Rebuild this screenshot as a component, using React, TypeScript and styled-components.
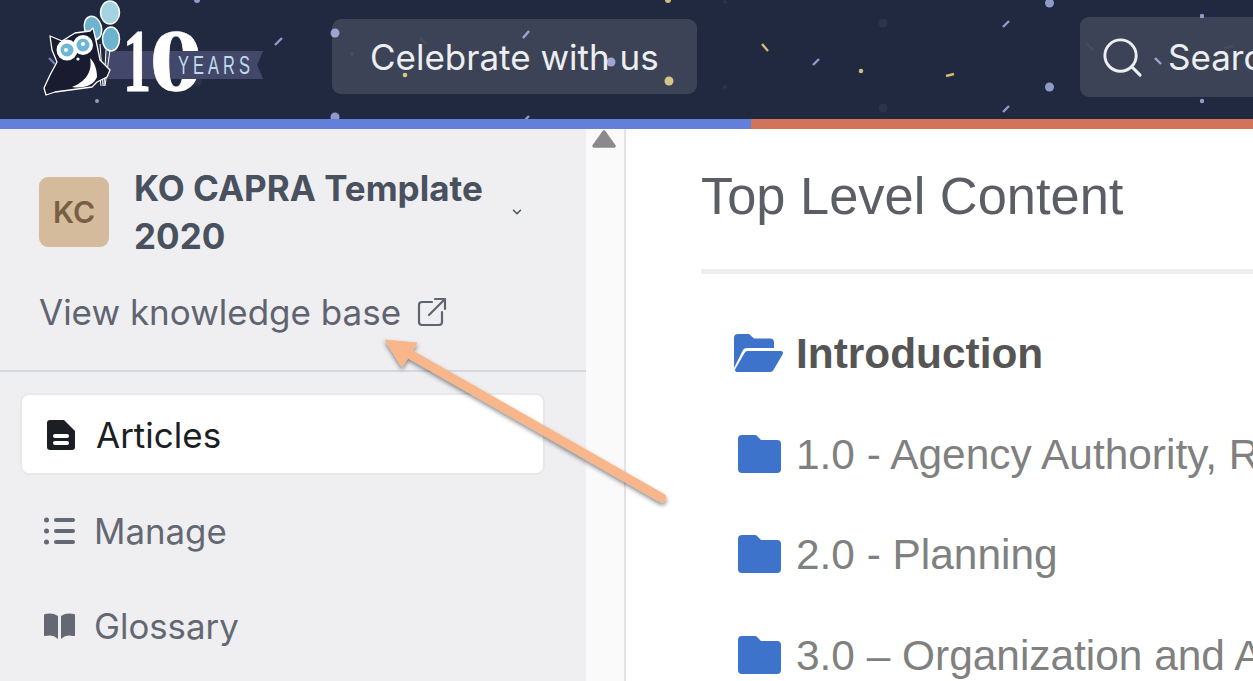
import React from "react";
import styled, { createGlobalStyle } from "styled-components";
import { Search, ChevronDown } from "lucide-react";

const Global = createGlobalStyle`
  html, body { margin: 0; padding: 0; height: 681px; overflow: hidden; background: #fff; }
  * { box-sizing: border-box; }
`;

const Page = styled.div`
  position: relative;
  width: 1253px;
  height: 681px;
  overflow: hidden;
  display: flex;
  flex-direction: column;
  font-family: Inter, "Liberation Sans", sans-serif;
`;

const Header = styled.header`
  position: relative;
  flex: 0 0 119px;
  display: flex;
  align-items: flex-start;
  background: #20293f;
  overflow: hidden;
`;

const Confetti = styled.svg`
  position: absolute;
  inset: 0;
  width: 1253px;
  height: 119px;
`;

const LogoMark = styled.svg`
  position: relative;
  flex: 0 0 230px;
  height: 100px;
  margin-left: 40px;
`;

const HeaderPill = styled.div<{ $top: number; $left: number; $width: number; $height: number; $pad: number }>`
  position: relative;
  flex: 0 0 ${(p) => p.$width}px;
  height: ${(p) => p.$height}px;
  margin-top: ${(p) => p.$top}px;
  margin-left: ${(p) => p.$left}px;
  display: flex;
  align-items: center;
  gap: 22px;
  padding-left: ${(p) => p.$pad}px;
  border-radius: 9px;
  background: rgba(255, 255, 255, 0.125);
  color: #eceef0;
  font-size: 35px;
  white-space: nowrap;
  overflow: hidden;
`;

const Progress = styled.div`
  flex: 0 0 10px;
  display: flex;
`;

const ProgressPart = styled.div<{ $color: string; $width?: number }>`
  background: ${(p) => p.$color};
  flex: ${(p) => (p.$width ? `0 0 ${p.$width}px` : "1")};
`;

const Main = styled.div`
  flex: 1;
  display: flex;
  min-height: 0;
`;

const Sidebar = styled.aside`
  flex: 0 0 586px;
  background: #efeff2;
  display: flex;
  flex-direction: column;
`;

const Workspace = styled.div`
  padding: 35px 0 0 39px;
  height: 243px;
  border-bottom: 2px solid #d5d8df;
`;

const WorkspaceRow = styled.div`
  display: flex;
  align-items: flex-start;
`;

const Avatar = styled.div`
  flex: 0 0 70px;
  height: 70px;
  margin-top: 13px;
  border-radius: 9px;
  background: #d4bb9c;
  color: #7a5e42;
  font-size: 30px;
  font-weight: 600;
  display: flex;
  align-items: center;
  justify-content: center;
`;

const WorkspaceName = styled.div`
  width: 370px;
  margin: 1px 0 0 25px;
  font-size: 35px;
  font-weight: 700;
  line-height: 47.5px;
  color: #49515e;
`;

const Caret = styled(ChevronDown)`
  width: 14px;
  height: 14px;
  margin: 41px 0 0 6px;
  color: #49515e;
`;

const ViewLink = styled.div`
  display: flex;
  align-items: center;
  gap: 16px;
  margin-top: 28px;
  font-size: 35px;
  line-height: 48px;
  color: #5f6470;
`;

const Nav = styled.nav`
  display: flex;
  flex-direction: column;
  padding: 21px 41px 0 20px;
`;

const NavCard = styled.div`
  height: 82px;
  display: flex;
  align-items: center;
  gap: 21px;
  padding: 1px 0 0 25px;
  background: #fff;
  border: 2px solid #e8e8eb;
  border-radius: 9px;
  color: #1b1e22;
  font-size: 35px;
`;

const NavItem = styled.div`
  height: 95px;
  display: flex;
  align-items: center;
  gap: 19px;
  padding-left: 24px;
  color: #646873;
  font-size: 34.8px;
  &:nth-child(2) { margin-top: 8px; }
`;

const Gutter = styled.div`
  flex: 0 0 40px;
  background: #fafafb;
  border-right: 2px solid #e3e3e8;
  display: flex;
  justify-content: center;
  padding: 1px 2px 0 0;
`;

const Content = styled.main`
  flex: 1;
  min-width: 0;
  padding: 33px 0 0 75px;
  font-family: "Liberation Sans", Arial, sans-serif;
  overflow: hidden;
`;

const Title = styled.h1`
  margin: 0;
  font-size: 52.4px;
  line-height: 68px;
  font-weight: 400;
  color: #5c5e66;
  white-space: nowrap;
`;

const Rule = styled.hr`
  margin: 39px 0 0;
  height: 5px;
  border: 0;
  background: #eeeeee;
`;

const Tree = styled.ul`
  list-style: none;
  margin: 30px 0 0;
  padding: 0;
`;

const TreeRow = styled.li<{ $active?: boolean }>`
  height: 100.5px;
  display: flex;
  align-items: center;
  gap: ${(p) => (p.$active ? 13 : 15)}px;
  padding-left: ${(p) => (p.$active ? 33 : 37)}px;
  font-size: 42.4px;
  white-space: nowrap;
  font-weight: ${(p) => (p.$active ? 700 : 400)};
  color: ${(p) => (p.$active ? "#555555" : "#808080")};
`;

const FolderIcon = styled.svg<{ $wide?: boolean }>`
  flex: none;
  width: ${(p) => (p.$wide ? 49 : 43)}px;
  height: 38px;
  fill: #3d73cb;
  margin-top: -2px;
`;

const Callout = styled.svg`
  position: absolute;
  inset: 0;
  width: 1253px;
  height: 681px;
  pointer-events: none;
`;

const peri = "#8f9aca";
const gold = "#cfbd78";
const dark = "#2c3449";

const dots: [number, number, number, string][] = [
  [335, 33, 4.5, peri], [335, 117, 4.5, peri], [97, 101, 2, peri], [197, 0, 3, peri],
  [198, 82, 4, dark], [352, 54, 2, dark], [405, 75, 2.3, gold], [611, 62, 4.5, peri],
  [669, 81, 4.5, gold], [668, 0, 3, gold], [725, 2, 2, dark], [725, 87, 2, dark],
  [883, 23, 4.5, dark], [883, 108, 4.5, dark], [861, 71, 2.3, gold],
  [1049.5, 3, 4.5, peri], [1049.5, 87, 4.5, peri], [1202, 16, 2.2, peri], [1202, 101, 2.2, peri],
];

const dashes: [number, number, number, number, string][] = [
  [49, 58, 55, 64, "#6f7cb8"], [275, 45, 282, 38, peri], [420, 38, 426, 44, dark],
  [523, 38, 529, 31, peri], [523, 122, 529, 116, peri], [762, 44, 768, 51, gold],
  [813, 65, 819, 59, peri], [946, 76, 954, 74, gold], [1003, 27, 1009, 21, peri],
  [1003, 112, 1009, 106, peri], [1155, 58, 1161, 64, peri], [1087, 44, 1093, 50, dark],
  [1224, 48, 1233, 46, dark],
];

const TreeItems = [
  "1.0 - Agency Authority, Role and Responsibility",
  "2.0 - Planning",
  "3.0 – Organization and Administration",
];

export default function App() {
  return (
    <Page>
      <Global />
      <Header>
        <Confetti viewBox="0 0 1253 119">
          {dots.map(([x, y, r, c], i) => (
            <circle key={i} cx={x} cy={y} r={r} fill={c} />
          ))}
          {dashes.map(([a, b, c, d, s], i) => (
            <line key={i} x1={a} y1={b} x2={c} y2={d} stroke={s} strokeWidth={2.4} />
          ))}
        </Confetti>
        <LogoMark viewBox="40 0 230 100">
          <path d="M105 51H263L257 65L263 79H105Z" fill="#43486a" />
          <g stroke="#fff" strokeWidth="1" fill="none">
            <path d="M100 44L103 86M106 50L104 86M110 50L105 86M96 40L101 86" />
          </g>
          <ellipse cx="110" cy="12.5" rx="9.5" ry="11.5" fill="#a4d3e2" stroke="#fff" strokeWidth="1.5" />
          <ellipse cx="93" cy="28" rx="8.5" ry="12" transform="rotate(-15 93 28)" fill="#6fb2d0" stroke="#fff" strokeWidth="1.5" />
          <ellipse cx="111" cy="39" rx="8.5" ry="12" fill="#6cb3d1" stroke="#fff" strokeWidth="1.5" />
          <path
            d="M50 36L62 41L75 33L90 31L93 28L97 45L100 60L110 70L107 77L97 82L92 87L70 90L55 92L46 95L44 88L50 75L57 62L52 50Z"
            fill="#191c30"
            stroke="#fff"
            strokeWidth="1.3"
            strokeLinejoin="round"
          />
          <path d="M90 58C93 72 85 82 72 87C84 89 94 85 97 77C97 70 95 63 90 58Z" fill="#fff" />
          <circle cx="67" cy="50" r="10.5" fill="#fff" />
          <circle cx="83" cy="45" r="10" fill="#fff" />
          <circle cx="67" cy="50" r="6.5" fill="#6fb6d4" />
          <circle cx="83" cy="45" r="6.5" fill="#6fb6d4" />
          <circle cx="66" cy="50" r="2" fill="#fff" />
          <circle cx="83" cy="44" r="2" fill="#fff" />
          <circle cx="78" cy="59" r="1.6" fill="#fff" />
          <text x="123" y="90" fill="#fff" stroke="#fff" strokeWidth="1" fontFamily="'Liberation Serif', serif" fontWeight="700" fontSize="89" textLength="28" lengthAdjust="spacingAndGlyphs">
            1
          </text>
          <text x="149.500" y="90" fill="#fff" stroke="#fff" strokeWidth="0.6" fontFamily="'Liberation Serif', serif" fontWeight="700" fontSize="89" textLength="53.400" lengthAdjust="spacingAndGlyphs">
            0
          </text>
          <path d="M172 51H263L257 65L263 79H172Z" fill="#43486a" />
          <text transform="translate(178 74) scale(.62 1)" fill="#bcdbe8" fontFamily="'Liberation Sans', sans-serif" fontSize="26.5" textLength="116" lengthAdjust="spacing">
            YEARS
          </text>
        </LogoMark>
        <HeaderPill $top={19} $left={62} $width={365} $height={75} $pad={38}>
          Celebrate with us
        </HeaderPill>
        <HeaderPill $top={17} $left={383} $width={420} $height={80} $pad={19}>
          <Search size={47} strokeWidth={1.5} />
          Search
        </HeaderPill>
      </Header>
      <Progress>
        <ProgressPart $color="#6280da" $width={751} />
        <ProgressPart $color="#d2745a" />
      </Progress>
      <Main>
        <Sidebar>
          <Workspace>
            <WorkspaceRow>
              <Avatar>KC</Avatar>
              <WorkspaceName>KO CAPRA Template 2020</WorkspaceName>
              <Caret strokeWidth={2.5} />
            </WorkspaceRow>
            <ViewLink>
              View knowledge base
              <svg width="30" height="30" viewBox="0 0 30 30" fill="none" stroke="#5f6470" strokeWidth="2.2" strokeLinecap="round" strokeLinejoin="round">
                <path d="M15 5H5a3 3 0 0 0-3 3v17a3 3 0 0 0 3 3h17a3 3 0 0 0 3-3V15" />
                <path d="M12 18L28 2M18 2h10v10" />
              </svg>
            </ViewLink>
          </Workspace>
          <Nav>
            <NavCard>
              <svg width="28" height="30" viewBox="0 0 28 30">
                <path d="M3 0H17L28 11V27a3 3 0 0 1-3 3H3a3 3 0 0 1-3-3V3a3 3 0 0 1 3-3Z" fill="#1b1e22" />
                <rect x="6" y="14" width="16" height="4" rx="2" fill="#fff" />
                <rect x="6" y="21" width="16" height="4" rx="2" fill="#fff" />
              </svg>
              Articles
            </NavCard>
            <NavItem>
              <svg width="31" height="28" viewBox="0 0 31 28" fill="#646873">
                <circle cx="2.5" cy="3" r="2.5" />
                <circle cx="2.5" cy="14" r="2.5" />
                <circle cx="2.5" cy="25" r="2.5" />
                <rect x="10" y="1" width="21" height="4" rx="2" />
                <rect x="10" y="12" width="21" height="4" rx="2" />
                <rect x="10" y="23" width="21" height="4" rx="2" />
              </svg>
              Manage
            </NavItem>
            <NavItem>
              <svg width="31" height="26" viewBox="0 0 31 26" fill="#646873">
                <path d="M14 3C10 0 5 0 1 1a1.5 1.5 0 0 0-1 1.500V22a1 1 0 0 0 1.300 1C6 22 10 22 14 26Z" />
                <path d="M17 3C21 0 26 0 30 1a1.5 1.5 0 0 1 1 1.500V22a1 1 0 0 1-1.300 1C25 22 21 22 17 26Z" />
              </svg>
              Glossary
            </NavItem>
          </Nav>
        </Sidebar>
        <Gutter>
          <svg width="24" height="19" viewBox="0 0 24 19">
            <path d="M12 2L22 16H2Z" fill="#8a8a8c" stroke="#8a8a8c" strokeWidth="3.5" strokeLinejoin="round" />
          </svg>
        </Gutter>
        <Content>
          <Title>Top Level Content</Title>
          <Rule />
          <Tree>
            <TreeRow $active>
              <FolderIcon $wide viewBox="0 0 49 38">
                <path d="M4 0H15l5 4.500H36a4 4 0 0 1 4 4V14H13a5 5 0 0 0-4.500 3L0 34V4a4 4 0 0 1 4-4Z" />
                <path d="M13.500 17H47a2 2 0 0 1 1.800 2.900L39.500 36a4 4 0 0 1-3.500 2H3a2 2 0 0 1-1.700-2.900L10.500 19a4 4 0 0 1 3-2Z" />
              </FolderIcon>
              Introduction
            </TreeRow>
            {TreeItems.map((t) => (
              <TreeRow key={t}>
                <FolderIcon viewBox="0 0 43 38">
                  <path d="M4 0H17a3 3 0 0 1 2.100.9L23 5H39a4 4 0 0 1 4 4V34a4 4 0 0 1-4 4H4a4 4 0 0 1-4-4V4a4 4 0 0 1 4-4Z" />
                </FolderIcon>
                {t}
              </TreeRow>
            ))}
          </Tree>
        </Content>
      </Main>
      <Callout viewBox="0 0 1253 681">
        <defs>
          <filter id="arrow-shadow" x="-10%" y="-10%" width="120%" height="130%">
            <feDropShadow dx="0" dy="2.5" stdDeviation="2.2" floodColor="#000" floodOpacity="0.45" />
          </filter>
        </defs>
        <g filter="url(#arrow-shadow)" fill="#f9b68a" stroke="#f9b68a">
          <path d="M408 353L662 498" strokeWidth="9" strokeLinecap="round" fill="none" />
          <path d="M385 340L417 343L402 367Z" strokeWidth="1" strokeLinejoin="round" />
        </g>
      </Callout>
    </Page>
  );
}
